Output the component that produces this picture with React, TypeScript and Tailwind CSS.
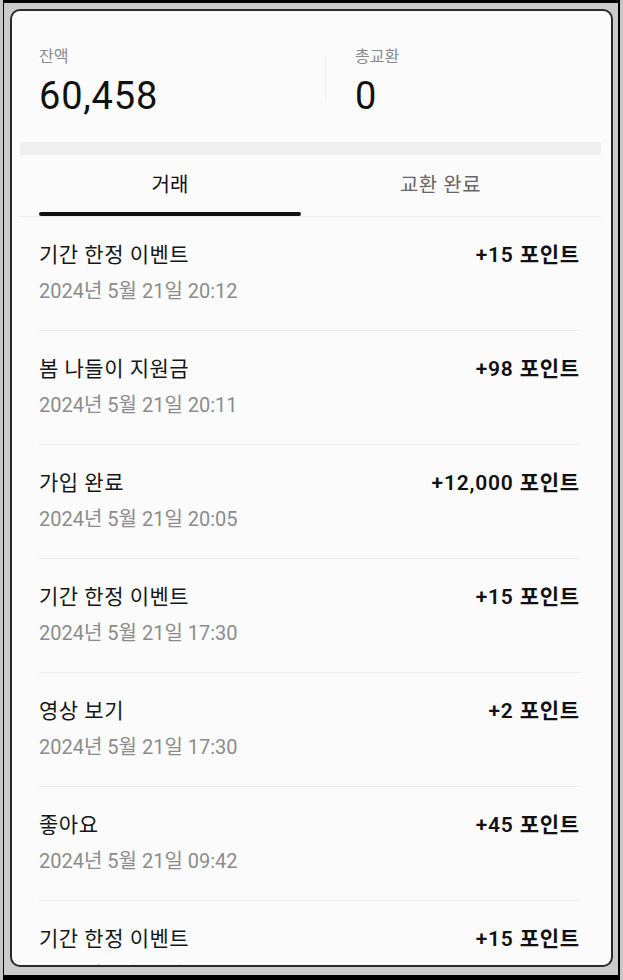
import { useState } from 'react';

type Txn = {
  title: string;
  date: string;
  points: string;
};

const txns: Txn[] = [
  { title: '기간 한정 이벤트', date: '2024년 5월 21일 20:12', points: '+15 포인트' },
  { title: '봄 나들이 지원금', date: '2024년 5월 21일 20:11', points: '+98 포인트' },
  { title: '가입 완료', date: '2024년 5월 21일 20:05', points: '+12,000 포인트' },
  { title: '기간 한정 이벤트', date: '2024년 5월 21일 17:30', points: '+15 포인트' },
  { title: '영상 보기', date: '2024년 5월 21일 17:30', points: '+2 포인트' },
  { title: '좋아요', date: '2024년 5월 21일 09:42', points: '+45 포인트' },
  { title: '기간 한정 이벤트', date: '2024년 5월 21일 09:40', points: '+15 포인트' },
];

const font = { fontFamily: 'Roboto, "Noto Sans CJK KR", sans-serif' };

export default function App() {
  const [tab, setTab] = useState<'history' | 'done'>('history');

  return (
    <div
      className="w-[623px] h-[980px] bg-black border-l-[3px] border-r-[3px] border-[#c6c6c6] pl-[1px] pr-[2px] pt-[3px] pb-[5px]"
      style={font}
    >
      <div className="h-full bg-[#cbcbcb] pl-[6px] pt-[6px] pr-[5px] pb-[8px]">
        <div className="h-full border-2 border-[#2a2a2a] rounded-[10px] overflow-hidden bg-[#fbfbfb]">
          <div className="pl-[8px] pr-[10px]">
            {/* balance summary */}
            <div className="flex pl-[19px] pt-[36px] pb-[24px]">
              <div className="w-[286px]">
                <div className="text-[16px] leading-[20px] text-[#8a8a8a]">잔액</div>
                <div className="mt-[7px] text-[38px] leading-[44px] tracking-[0.8px] text-[#111]">60,458</div>
              </div>
              <div className="w-px h-[46px] mt-[8px] bg-[#ececec]" />
              <div className="pl-[29px]">
                <div className="text-[16px] leading-[20px] text-[#8a8a8a]">총교환</div>
                <div className="mt-[7px] text-[38px] leading-[44px] text-[#111]">0</div>
              </div>
            </div>

            <div className="h-[13px] bg-[#efefef]" />

            {/* tabs */}
            <div className="flex pl-[19px] pr-[21px] border-b border-[#ececec]">
              <button
                onClick={() => setTab('history')}
                className="w-[262px] flex flex-col"
              >
                <span
                  className={`h-[57px] pt-[3px] flex items-center justify-center text-[20px] ${
                    tab === 'history' ? 'text-[#111]' : 'text-[#666]'
                  }`}
                >
                  거래
                </span>
                <span
                  className={`h-[4px] rounded-full ${tab === 'history' ? 'bg-[#111]' : 'bg-transparent'}`}
                />
              </button>
              <button onClick={() => setTab('done')} className="flex-1 flex flex-col">
                <span
                  className={`h-[57px] pt-[3px] flex items-center justify-center text-[20px] tracking-[0.5px] ${
                    tab === 'done' ? 'text-[#111]' : 'text-[#666]'
                  }`}
                >
                  교환 완료
                </span>
                <span
                  className={`h-[4px] rounded-full ${tab === 'done' ? 'bg-[#111]' : 'bg-transparent'}`}
                />
              </button>
            </div>
          </div>

          {/* transactions */}
          <div className="pl-[27px] pr-[31px]">
            {txns.map((t, i) => (
              <div key={i} className="h-[114px] pt-[24px] border-b border-[#ececec] flex justify-between">
                <div>
                  <div className="text-[21px] leading-[28px] tracking-[0.5px] text-[#161616]">{t.title}</div>
                  <div className="mt-[8px] text-[20px] leading-[28px] text-[#8c8c8c]">{t.date}</div>
                </div>
                <div className="text-[21px] leading-[28px] font-semibold tracking-[0.8px] text-[#111]">{t.points}</div>
              </div>
            ))}
          </div>
        </div>
      </div>
    </div>
  );
}
